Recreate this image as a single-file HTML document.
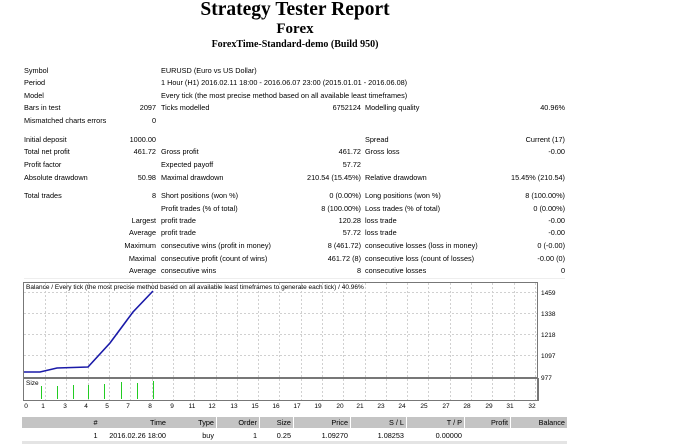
<!DOCTYPE html>
<html><head><meta charset="utf-8"><style>
*{margin:0;padding:0;box-sizing:border-box}
body{width:673px;height:444px;background:#fff;position:relative;overflow:hidden;font-family:"Liberation Sans","DejaVu Sans",sans-serif;font-size:7.3px;color:#000}
.t{position:absolute;white-space:nowrap;line-height:10px}
.r{text-align:right}
.h{position:absolute;left:0;width:590px;text-align:center;font-family:"Liberation Serif",serif;font-weight:bold;white-space:nowrap}
.hd{position:absolute;top:417px;height:11px;background:#c4c4c4;line-height:11px;text-align:right;padding-right:2px;font-size:7.3px}
.cell{position:absolute;top:431px;line-height:10px;text-align:right;padding-right:2px}
.gb{position:absolute;width:1px;background:#22cc22;bottom:45px}
</style></head><body>
<div class="h" style="top:-1px;font-size:19.5px">Strategy Tester Report</div>
<div class="h" style="top:21px;font-size:15px">Forex</div>
<div class="h" style="top:39px;font-size:10px">ForexTime-Standard-demo (Build 950)</div>

<div class="t" style="left:24px;top:66px">Symbol</div><div class="t" style="left:161px;top:66px">EURUSD (Euro vs US Dollar)</div>
<div class="t" style="left:24px;top:78px">Period</div><div class="t" style="left:161px;top:78px">1 Hour (H1) 2016.02.11 18:00 - 2016.06.07 23:00 (2015.01.01 - 2016.06.08)</div>
<div class="t" style="left:24px;top:91px">Model</div><div class="t" style="left:161px;top:91px">Every tick (the most precise method based on all available least timeframes)</div>
<div class="t" style="left:24px;top:103px">Bars in test</div><div class="t r" style="right:517px;top:103px">2097</div><div class="t" style="left:161px;top:103px">Ticks modelled</div><div class="t r" style="right:312px;top:103px">6752124</div><div class="t" style="left:365px;top:103px">Modelling quality</div><div class="t r" style="right:108px;top:103px">40.96%</div>
<div class="t" style="left:24px;top:116px">Mismatched charts errors</div><div class="t r" style="right:517px;top:116px">0</div>

<div class="t" style="left:24px;top:135px">Initial deposit</div><div class="t r" style="right:517px;top:135px">1000.00</div><div class="t" style="left:365px;top:135px">Spread</div><div class="t r" style="right:108px;top:135px">Current (17)</div>
<div class="t" style="left:24px;top:147px">Total net profit</div><div class="t r" style="right:517px;top:147px">461.72</div><div class="t" style="left:161px;top:147px">Gross profit</div><div class="t r" style="right:312px;top:147px">461.72</div><div class="t" style="left:365px;top:147px">Gross loss</div><div class="t r" style="right:108px;top:147px">-0.00</div>
<div class="t" style="left:24px;top:160px">Profit factor</div><div class="t" style="left:161px;top:160px">Expected payoff</div><div class="t r" style="right:312px;top:160px">57.72</div>
<div class="t" style="left:24px;top:173px">Absolute drawdown</div><div class="t r" style="right:517px;top:173px">50.98</div><div class="t" style="left:161px;top:173px">Maximal drawdown</div><div class="t r" style="right:312px;top:173px">210.54 (15.45%)</div><div class="t" style="left:365px;top:173px">Relative drawdown</div><div class="t r" style="right:108px;top:173px">15.45% (210.54)</div>

<div class="t" style="left:24px;top:191px">Total trades</div><div class="t r" style="right:517px;top:191px">8</div><div class="t" style="left:161px;top:191px">Short positions (won %)</div><div class="t r" style="right:312px;top:191px">0 (0.00%)</div><div class="t" style="left:365px;top:191px">Long positions (won %)</div><div class="t r" style="right:108px;top:191px">8 (100.00%)</div>
<div class="t" style="left:161px;top:204px">Profit trades (% of total)</div><div class="t r" style="right:312px;top:204px">8 (100.00%)</div><div class="t" style="left:365px;top:204px">Loss trades (% of total)</div><div class="t r" style="right:108px;top:204px">0 (0.00%)</div>
<div class="t r" style="right:517px;top:216px">Largest</div><div class="t" style="left:161px;top:216px">profit trade</div><div class="t r" style="right:312px;top:216px">120.28</div><div class="t" style="left:365px;top:216px">loss trade</div><div class="t r" style="right:108px;top:216px">-0.00</div>
<div class="t r" style="right:517px;top:228px">Average</div><div class="t" style="left:161px;top:228px">profit trade</div><div class="t r" style="right:312px;top:228px">57.72</div><div class="t" style="left:365px;top:228px">loss trade</div><div class="t r" style="right:108px;top:228px">-0.00</div>
<div class="t r" style="right:517px;top:241px">Maximum</div><div class="t" style="left:161px;top:241px">consecutive wins (profit in money)</div><div class="t r" style="right:312px;top:241px">8 (461.72)</div><div class="t" style="left:365px;top:241px">consecutive losses (loss in money)</div><div class="t r" style="right:108px;top:241px">0 (-0.00)</div>
<div class="t r" style="right:517px;top:254px">Maximal</div><div class="t" style="left:161px;top:254px">consecutive profit (count of wins)</div><div class="t r" style="right:312px;top:254px">461.72 (8)</div><div class="t" style="left:365px;top:254px">consecutive loss (count of losses)</div><div class="t r" style="right:108px;top:254px">-0.00 (0)</div>
<div class="t r" style="right:517px;top:266px">Average</div><div class="t" style="left:161px;top:266px">consecutive wins</div><div class="t r" style="right:312px;top:266px">8</div><div class="t" style="left:365px;top:266px">consecutive losses</div><div class="t r" style="right:108px;top:266px">0</div>
<div style="position:absolute;left:24px;top:278px;width:541px;height:1px;background:#eee"></div>

<svg style="position:absolute;left:0;top:0" width="673" height="444">
<g stroke="#d0d0d0" stroke-width="1" stroke-dasharray="2,2" fill="none">
<line x1="24" y1="292.5" x2="538" y2="292.5"/><line x1="24" y1="313.5" x2="538" y2="313.5"/><line x1="24" y1="334.5" x2="538" y2="334.5"/><line x1="24" y1="355.5" x2="538" y2="355.5"/>
<line x1="45.5" y1="283" x2="45.5" y2="400"/><line x1="66.5" y1="283" x2="66.5" y2="400"/><line x1="88.5" y1="283" x2="88.5" y2="400"/><line x1="109.5" y1="283" x2="109.5" y2="400"/><line x1="130.5" y1="283" x2="130.5" y2="400"/><line x1="152.5" y1="283" x2="152.5" y2="400"/><line x1="173.5" y1="283" x2="173.5" y2="400"/><line x1="194.5" y1="283" x2="194.5" y2="400"/><line x1="216.5" y1="283" x2="216.5" y2="400"/><line x1="237.5" y1="283" x2="237.5" y2="400"/><line x1="258.5" y1="283" x2="258.5" y2="400"/><line x1="279.5" y1="283" x2="279.5" y2="400"/><line x1="301.5" y1="283" x2="301.5" y2="400"/><line x1="322.5" y1="283" x2="322.5" y2="400"/><line x1="343.5" y1="283" x2="343.5" y2="400"/><line x1="365.5" y1="283" x2="365.5" y2="400"/><line x1="386.5" y1="283" x2="386.5" y2="400"/><line x1="407.5" y1="283" x2="407.5" y2="400"/><line x1="428.5" y1="283" x2="428.5" y2="400"/><line x1="450.5" y1="283" x2="450.5" y2="400"/><line x1="471.5" y1="283" x2="471.5" y2="400"/><line x1="492.5" y1="283" x2="492.5" y2="400"/><line x1="514.5" y1="283" x2="514.5" y2="400"/><line x1="535.5" y1="283" x2="535.5" y2="400"/>
</g>
<rect x="23.5" y="282.5" width="514" height="118" fill="none" stroke="#777" stroke-width="1"/>
<line x1="23" y1="378" x2="538" y2="378" stroke="#777" stroke-width="2"/>
<line x1="538" y1="378" x2="538" y2="401" stroke="#777" stroke-width="2"/>
<polyline points="24,372 40,372 57,368 88,367 110,343 133,312 153,291" fill="none" stroke="#1a1aa8" stroke-width="1.6"/>
<g font-family="Liberation Sans, sans-serif" font-size="6.5" fill="#000">
<text x="26" y="289">Balance / Every tick (the most precise method based on all available least timeframes to generate each tick) / 40.96%</text>
<text x="26" y="385">Size</text>
<text x="541" y="295">1459</text><text x="541" y="316">1338</text><text x="541" y="337">1218</text><text x="541" y="358">1097</text><text x="541" y="380">977</text>
</g>
<g font-family="Liberation Sans, sans-serif" font-size="6.5" fill="#000" text-anchor="middle">
<text x="26" y="408">0</text><text x="43" y="408">1</text><text x="65" y="408">3</text><text x="86" y="408">4</text><text x="107" y="408">5</text><text x="128" y="408">7</text><text x="150" y="408">8</text><text x="172" y="408">9</text><text x="192" y="408">11</text><text x="212" y="408">12</text><text x="234" y="408">13</text><text x="255" y="408">15</text><text x="276" y="408">16</text><text x="297" y="408">17</text><text x="318" y="408">19</text><text x="340" y="408">20</text><text x="360" y="408">21</text><text x="381" y="408">23</text><text x="402" y="408">24</text><text x="424" y="408">25</text><text x="446" y="408">27</text><text x="467" y="408">28</text><text x="489" y="408">29</text><text x="510" y="408">31</text><text x="532" y="408">32</text>
</g>
</svg>
<div class="gb" style="left:41px;height:13px"></div>
<div class="gb" style="left:57px;height:13px"></div>
<div class="gb" style="left:73px;height:14px"></div>
<div class="gb" style="left:88px;height:14px"></div>
<div class="gb" style="left:104px;height:15px"></div>
<div class="gb" style="left:121px;height:17px"></div>
<div class="gb" style="left:137px;height:16px"></div>
<div class="gb" style="left:153px;height:18px"></div>

<div class="hd" style="left:22px;width:147px;text-align:center;padding:0">#</div>
<div class="hd" style="left:22px;width:146px;background:transparent">Time</div>
<div class="hd" style="left:169px;width:47px">Type</div>
<div class="hd" style="left:217px;width:42px">Order</div>
<div class="hd" style="left:260px;width:33px">Size</div>
<div class="hd" style="left:294px;width:56px">Price</div>
<div class="hd" style="left:351px;width:55px">S / L</div>
<div class="hd" style="left:407px;width:57px">T / P</div>
<div class="hd" style="left:465px;width:45px">Profit</div>
<div class="hd" style="left:511px;width:56px">Balance</div>

<div class="cell" style="left:22px;width:147px;text-align:center;padding:0">1</div>
<div class="cell" style="left:22px;width:146px">2016.02.26 18:00</div>
<div class="cell" style="left:169px;width:47px">buy</div>
<div class="cell" style="left:217px;width:42px">1</div>
<div class="cell" style="left:260px;width:33px">0.25</div>
<div class="cell" style="left:294px;width:56px">1.09270</div>
<div class="cell" style="left:351px;width:55px">1.08253</div>
<div class="cell" style="left:407px;width:57px">0.00000</div>
<div style="position:absolute;left:22px;top:441px;width:545px;height:3px;background:#e4e4e4"></div>
</body></html>
